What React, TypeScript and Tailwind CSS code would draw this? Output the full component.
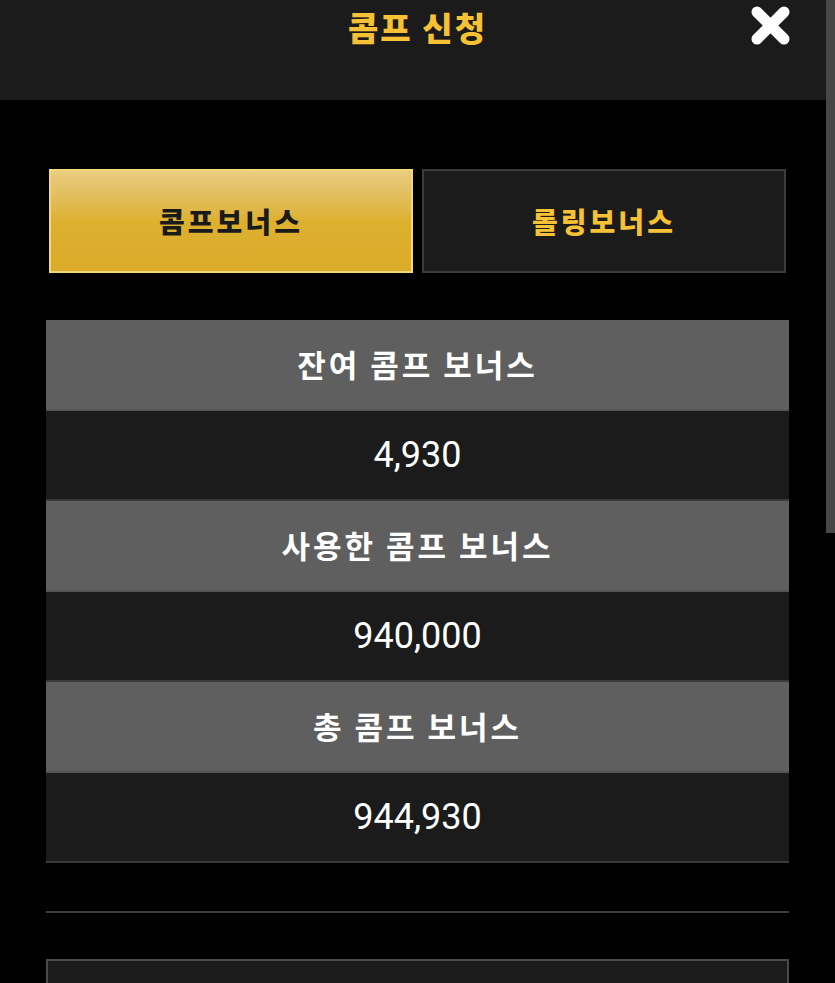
const rows = [
  { label: "잔여 콤프 보너스", value: "4,930" },
  { label: "사용한 콤프 보너스", value: "940,000" },
  { label: "총 콤프 보너스", value: "944,930" },
];

function CloseIcon() {
  return (
    <svg width="39" height="39" viewBox="0 0 39 39" fill="none">
      <path d="M6 6L33 33M33 6L6 33" stroke="#ffffff" strokeWidth="11" strokeLinecap="round" />
    </svg>
  );
}

export default function App() {
  return (
    <div
      className="relative min-h-[983px] w-full bg-black"
      style={{ fontFamily: '"Noto Sans CJK KR", "Noto Sans", sans-serif' }}
    >
      <header className="relative flex h-[100px] items-start justify-center bg-[#1b1b1b] pt-[5px]">
        <h1 className="text-[33px] font-extrabold leading-[44px] tracking-[2px] text-[#f6c135]">콤프 신청</h1>
        <button className="absolute right-[45px] top-[6px]">
          <CloseIcon />
        </button>
      </header>

      <main className="px-[46px] pt-[69px]">
        <div className="flex gap-[9px] px-[3px]">
          <button className="flex h-[104px] flex-1 items-center justify-center border-2 border-[#f3d77a] bg-gradient-to-b from-[#e9cc7f] via-[#ddb02f] to-[#dcab2a] text-[28px] font-extrabold tracking-[3px] text-[#1a1a1a]">
            콤프보너스
          </button>
          <button className="flex h-[104px] flex-1 items-center justify-center border-2 border-[#3b3b3b] bg-[#1b1b1b] text-[28px] font-extrabold tracking-[3px] text-[#f6c135]">
            롤링보너스
          </button>
        </div>

        <div className="mt-[47px]">
          {rows.map((row) => (
            <div key={row.label}>
              <div className="flex h-[91px] items-center justify-center border-b-2 border-[#555555] bg-[#5f5f5f] text-[31px] font-bold tracking-[3px] text-white">
                {row.label}
              </div>
              <div
                className="flex h-[90px] items-center justify-center border-b-2 border-[#3a3a3a] bg-[#1b1b1b] text-[36px] text-white"
                style={{ fontFamily: 'Roboto, "Noto Sans CJK KR", sans-serif' }}
              >
                {row.value}
              </div>
            </div>
          ))}
        </div>

        <div className="mt-[48px] h-[2px] bg-[#3d3d3d]" />

        <div className="mt-[46px] h-[60px] border-2 border-[#4a4a4a] bg-[#1b1b1b]" />
      </main>

      <div className="absolute right-0 top-0 h-[533px] w-[9px] bg-[#474747]" />
    </div>
  );
}
